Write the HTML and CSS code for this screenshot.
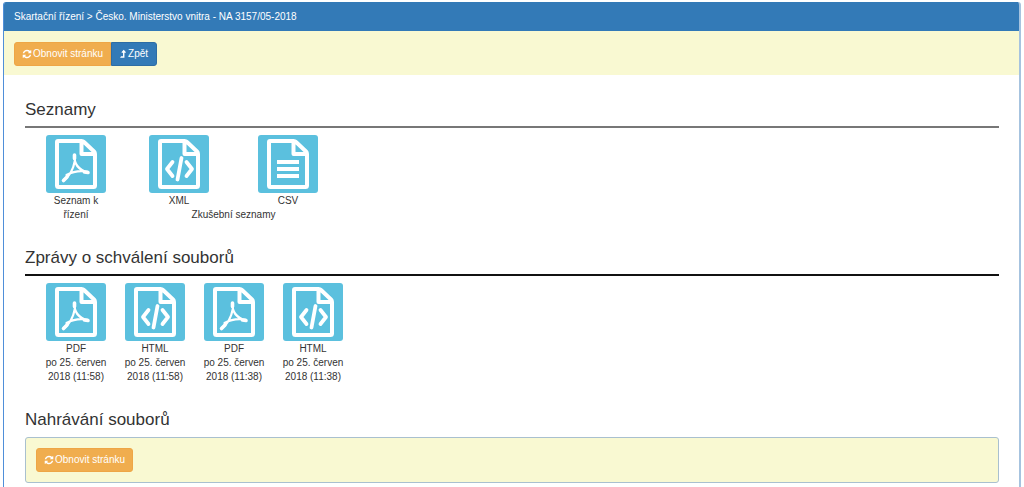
FILE: index.html
```html
<!DOCTYPE html>
<html lang="cs">
<head>
<meta charset="utf-8">
<title>Skartační řízení</title>
<link rel="stylesheet" href="styles.css">
</head>
<body>
<svg class="defs" aria-hidden="true">
  <symbol id="refresh" viewBox="0 0 1792 1792"><path fill="currentColor" d="M1639 1056q0 5-1 7-64 268-268 434.500t-478 166.500q-146 0-282.500-55t-243.500-157l-129 129q-19 19-45 19t-45-19-19-45v-448q0-26 19-45t45-19h448q26 0 45 19t19 45-19 45l-137 137q71 66 161 102t187 36q134 0 250-65t186-179q11-17 53-117 8-23 30-23h192q13 0 22.500 9.500t9.500 22.500zm25-800v448q0 26-19 45t-45 19h-448q-26 0-45-19t-19-45 19-45l138-138q-148-137-349-137-134 0-250 65t-186 179q-11 17-53 117-8 23-30 23h-199q-13 0-22.500-9.500t-9.500-22.500v-7q65-268 270-434.500t480-166.500q146 0 284 55.500t245 156.500l130-129q19-19 45-19t45 19 19 45z"/></symbol>
  <symbol id="level-up" viewBox="256 0 1024 1792"><path fill="currentColor" d="M1275 627q-18 37-58 37h-192v864q0 14-9 23t-23 9h-704q-21 0-29-18-8-20 4-35l160-192q9-11 25-11h320v-640h-192q-40 0-58-37-17-37 9-68l320-384q18-22 49-22t49 22l320 384q27 32 9 68z"/></symbol>
  <symbol id="sheet" viewBox="0 0 60 58"><path fill="none" stroke="currentColor" stroke-width="4" stroke-linejoin="round" d="M12 6H35.500Q37 6 38 7L48 16.500Q49 17.500 49 19V50.500Q49 52 47.500 52H12.500Q11 52 11 50.500V7Q11 6 12 6ZM35.500 6V19H49"/></symbol>
  <symbol id="pdf" viewBox="0 0 60 58"><use href="#sheet"/><g fill="none" stroke="currentColor" stroke-linecap="round" stroke-linejoin="round"><path stroke-width="2.200" d="M28.500 20C28 27 30.500 34 41.500 37.500M28.800 26C27.500 33 23.500 41 18 45M20.500 40C27 36.500 34 35.200 42 36.800"/><path stroke-width="3.600" d="M28.500 20V23.500M38.500 37L42 37.500M17.500 45.500L21 42"/></g></symbol>
  <symbol id="code" viewBox="0 0 60 58"><use href="#sheet"/><path fill="none" stroke="currentColor" stroke-width="3.800" stroke-linecap="round" stroke-linejoin="round" d="M23.500 27L18 34L23.500 41M32.500 23L28.500 44.500M37.500 27L43 34L37.500 41"/></symbol>
  <symbol id="text" viewBox="0 0 60 58"><use href="#sheet"/><path fill="none" stroke="currentColor" stroke-width="4" d="M19 27H41M19 34H41M19 41H41"/></symbol>
</svg>
<main class="panel">
  <header class="panel-heading">Skartační řízení &gt; Česko. Ministerstvo vnitra - NA 3157/05-2018</header>
  <div class="toolbar">
    <div class="btn-group">
      <button type="button" class="btn btn-warning"><svg class="icon"><use href="#refresh"/></svg> Obnovit stránku</button>
      <button type="button" class="btn btn-primary"><svg class="icon icon-narrow"><use href="#level-up"/></svg> Zpět</button>
    </div>
  </div>
  <div class="panel-body">
    <section class="section">
      <h2 class="title ruled ruled-soft">Seznamy</h2>
      <div class="files files-wide">
        <a class="file" href="#"><svg class="tile"><use href="#pdf"/></svg><span>Seznam k<br>řízení</span></a>
        <div class="file-group">
          <div class="pair">
            <a class="file" href="#"><svg class="tile"><use href="#code"/></svg><span>XML</span></a>
            <a class="file" href="#"><svg class="tile"><use href="#text"/></svg><span>CSV</span></a>
          </div>
          <span>Zkušební seznamy</span>
        </div>
      </div>
    </section>
    <section class="section">
      <h2 class="title ruled">Zprávy o schválení souborů</h2>
      <div class="files">
        <a class="file" href="#"><svg class="tile"><use href="#pdf"/></svg><span>PDF<br>po 25. červen<br>2018 (11:58)</span></a>
        <a class="file" href="#"><svg class="tile"><use href="#code"/></svg><span>HTML<br>po 25. červen<br>2018 (11:58)</span></a>
        <a class="file" href="#"><svg class="tile"><use href="#pdf"/></svg><span>PDF<br>po 25. červen<br>2018 (11:38)</span></a>
        <a class="file" href="#"><svg class="tile"><use href="#code"/></svg><span>HTML<br>po 25. červen<br>2018 (11:38)</span></a>
      </div>
    </section>
    <section class="section">
      <h2 class="title">Nahrávání souborů</h2>
      <div class="well">
        <button type="button" class="btn btn-warning"><svg class="icon"><use href="#refresh"/></svg> Obnovit stránku</button>
      </div>
    </section>
  </div>
</main>
</body>
</html>
```
FILE: styles.css
```css
* {
  box-sizing: border-box;
}

body {
  margin: 0;
  padding: 2px 3px 0;
  background: #fff;
  color: #333;
  font: 10px/14px "Liberation Sans", Arial, sans-serif;
}

.defs {
  display: block;
  width: 0;
  height: 0;
}

.panel {
  min-height: calc(100vh - 2px);
  border-left: 1px solid #4f8fd9;
  border-right: 2px solid #a6c3df;
  border-radius: 3px 3px 0 0;
  overflow: hidden;
}

.panel-heading {
  padding: 8px 10px 7px;
  background: #337ab7;
  color: #fff;
}

.toolbar {
  padding: 11px 10px 9px;
  background: #f9f9d2;
}

.btn-group {
  display: flex;
}

.btn {
  display: inline-flex;
  align-items: center;
  gap: 1px;
  height: 24px;
  padding: 0 7px;
  border: 1px solid;
  border-radius: 3px;
  color: #fff;
  font: inherit;
  cursor: pointer;
}

.btn-group .btn:first-child {
  border-radius: 3px 0 0 3px;
}

.btn-group .btn:last-child {
  border-radius: 0 3px 3px 0;
}

.btn-warning {
  background: #f0ad4e;
  border-color: #eea646;
}

.btn-primary {
  gap: 2px;
  padding: 0 8px;
  background: #337ab7;
  border-color: #2e6da4;
}

.icon {
  width: 10px;
  height: 10px;
}

.icon-narrow {
  width: 6px;
}

.panel-body {
  display: flex;
  flex-direction: column;
  gap: 26px;
  padding: 25px 20px 4px 21px;
}

.title {
  margin: 0;
  font-size: 17px;
  font-weight: 400;
  line-height: 20px;
}

.ruled {
  padding-bottom: 6px;
  border-bottom: 2px solid #111;
}

.ruled-soft {
  border-color: #777;
}

.files {
  display: flex;
  gap: 19px;
  padding: 7px 21px 0;
}

.files-wide {
  gap: 43px;
}

.file,
.file-group {
  display: flex;
  flex-direction: column;
  align-items: center;
  color: inherit;
  text-align: center;
  text-decoration: none;
  white-space: nowrap;
}

.file {
  gap: 1px;
  width: 60px;
}

.pair {
  display: flex;
  gap: 49px;
}

.tile {
  width: 60px;
  height: 58px;
  border-radius: 3px;
  background: #5bc0de;
  color: #fff;
}

.well {
  margin-top: 7px;
  padding: 10px;
  border: 1px solid #a9c0cf;
  border-radius: 3px;
  background: #f9f9d2;
}

.well .btn {
  display: flex;
}
```
